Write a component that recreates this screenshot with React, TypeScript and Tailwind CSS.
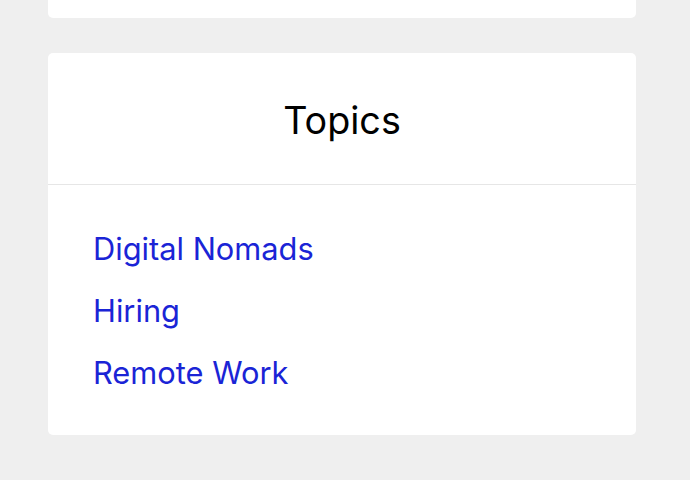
export default function App() {
  return (
    <div className="min-h-[480px] w-[690px] bg-[#efefef] overflow-hidden" style={{ fontFamily: 'Inter, "Liberation Sans", Arial, sans-serif' }}>
      <div className="ml-[48px] w-[588px] flex flex-col gap-[35px]">
        <div className="h-[18px] bg-white rounded-b-[5px]" />
        <div className="bg-white rounded-[5px]">
          <div className="h-[132px] flex items-center justify-center border-b border-[#e6e6e6] pt-[4px]">
            <h2 className="text-[37.7px] text-black leading-none">Topics</h2>
          </div>
          <ul className="px-[45px] pt-[33px] pb-[31px]">
            {["Digital Nomads", "Hiring", "Remote Work"].map((t) => (
              <li key={t} className="h-[62px] flex items-center">
                <a className="text-[30.8px] text-[#1a24d6] leading-none">{t}</a>
              </li>
            ))}
          </ul>
        </div>
      </div>
    </div>
  );
}
